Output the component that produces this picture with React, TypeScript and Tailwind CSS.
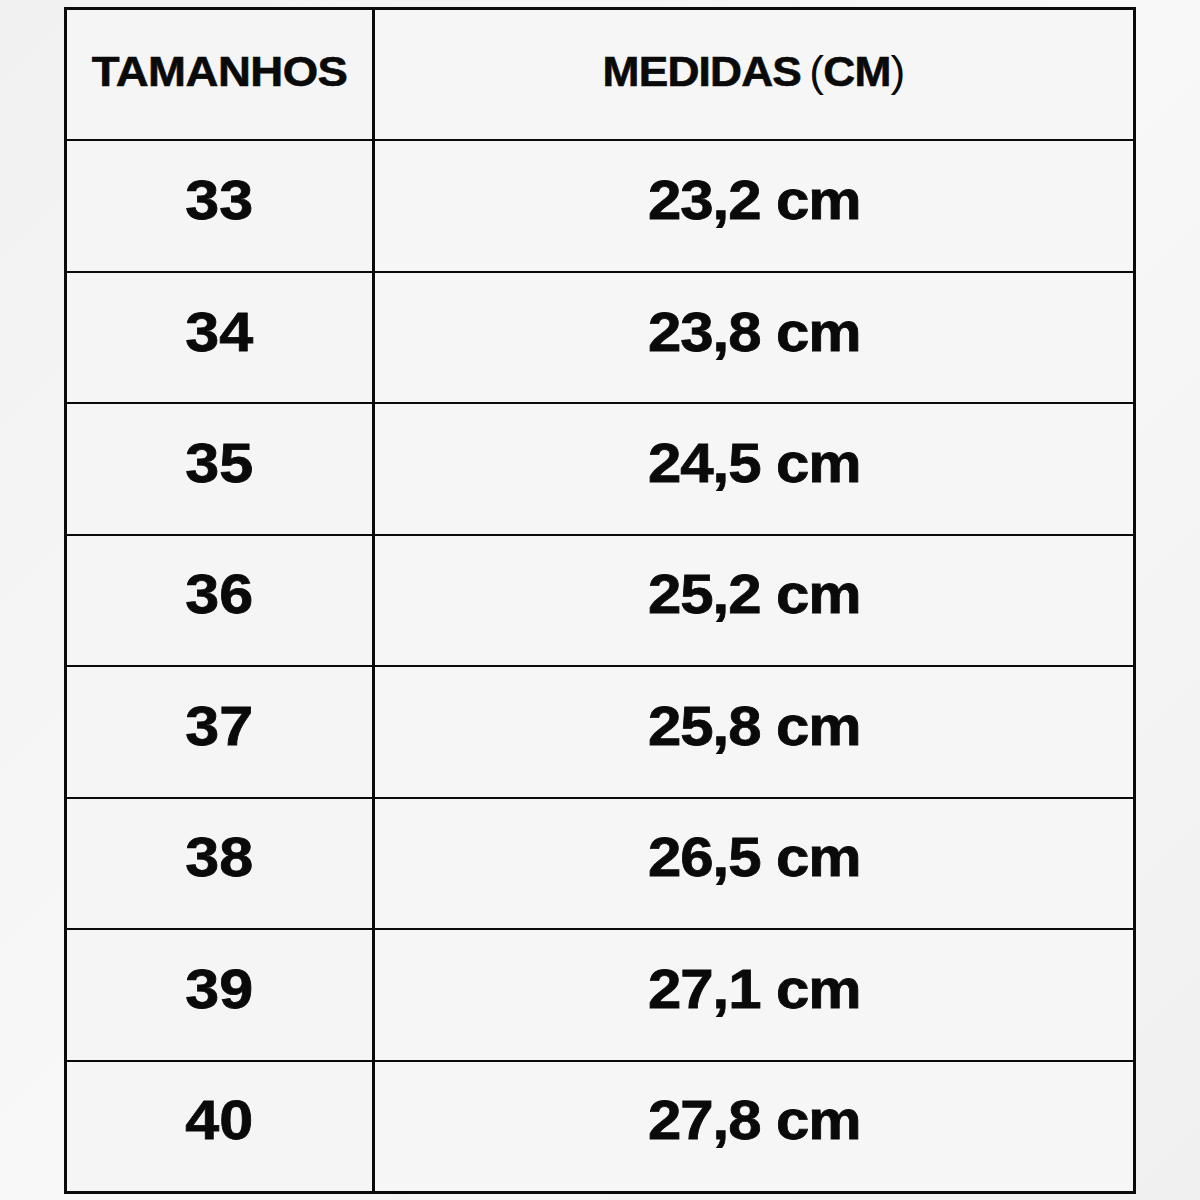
import React from "react";

const rows: [string, string][] = [
  ["33", "23,2 cm"],
  ["34", "23,8 cm"],
  ["35", "24,5 cm"],
  ["36", "25,2 cm"],
  ["37", "25,8 cm"],
  ["38", "26,5 cm"],
  ["39", "27,1 cm"],
  ["40", "27,8 cm"],
];

export default function App() {
  return (
    <div
      className="w-[1200px] h-[1200px] bg-[#f3f3f3] bg-gradient-to-br from-[#f1f1f1] via-[#f8f8f8] to-[#f0f0f0] pl-[64px] pt-[7px]"
      style={{ fontFamily: '"Liberation Sans", Arial, sans-serif' }}
    >
      <div className="w-[1072px] h-[1187px] border-[3px] border-[#0a0a0a] bg-[#0a0a0a] grid grid-cols-[305px_1fr] grid-rows-[repeat(9,1fr)] gap-x-[3px] gap-y-[2px] text-[#0a0a0a]">
        <div className="bg-[#f5f5f5] flex items-center justify-center pb-[6px]">
          <span className="text-[43px] font-bold tracking-[-0.5px] scale-x-[1.06] [-webkit-text-stroke:0.6px_#0a0a0a]">TAMANHOS</span>
        </div>
        <div className="bg-[#f6f6f6] flex items-center justify-center pb-[6px]">
          <span className="text-[43px] font-bold tracking-[-0.8px] scale-x-[1.03] [-webkit-text-stroke:0.6px_#0a0a0a]">
            MEDIDAS<span className="font-normal [-webkit-text-stroke:0px] ml-[8px]">(</span>CM<span className="font-normal [-webkit-text-stroke:0px]">)</span>
          </span>
        </div>
        {rows.map(([s, m]) => (
          <React.Fragment key={s}>
            <div className="bg-[#f5f5f5] flex items-center justify-center pb-[12px]">
              <span className="text-[56px] font-bold tracking-[0px] scale-x-[1.09] [-webkit-text-stroke:0.8px_#0a0a0a]">{s}</span>
            </div>
            <div className="bg-[#f6f6f6] flex items-center justify-center pb-[12px]">
              <span className="text-[56px] font-bold tracking-[-1px] scale-x-[1.07] [-webkit-text-stroke:0.8px_#0a0a0a]">{m}</span>
            </div>
          </React.Fragment>
        ))}
      </div>
    </div>
  );
}
